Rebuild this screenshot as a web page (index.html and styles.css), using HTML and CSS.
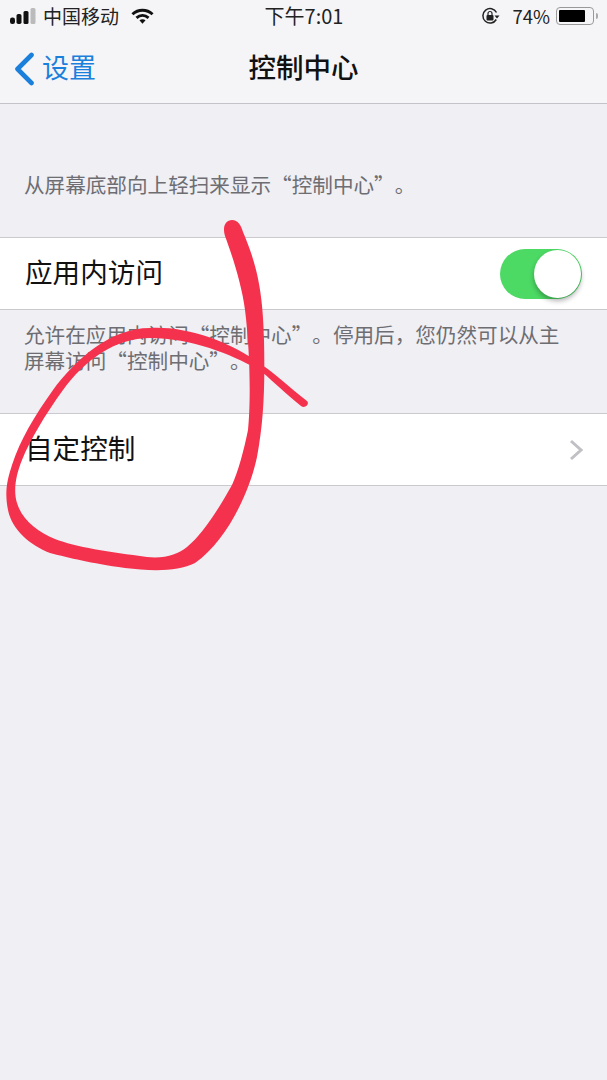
FILE: index.html
```html
<!DOCTYPE html>
<html lang="zh-CN">
<head>
<meta charset="utf-8">
<title>控制中心</title>
<link rel="stylesheet" href="styles.css">
</head>
<body>
<div class="screen">
  <header class="top">
    <div class="status">
      <div class="status-left">
        <svg class="signal" width="26" height="16" viewBox="0 0 26 16"><rect x="0" y="9.500" width="5" height="6.500" rx="2.200" fill="#111"/><rect x="6.500" y="6" width="5" height="10" rx="1.800" fill="#111"/><rect x="13.500" y="3" width="5" height="13" rx="1.500" fill="#111"/><rect x="20.500" y="0" width="5" height="16" rx="1.500" fill="#bbb"/></svg>
        <span class="carrier">中国移动</span>
        <svg class="wifi" width="23" height="17" viewBox="0 0 24 17"><path d="M1.500 6.200C7.500 .6 16.500 .6 22.500 6.200" fill="none" stroke="#111" stroke-width="3"/><path d="M5.700 10C9.500 6.600 14.500 6.600 18.300 10" fill="none" stroke="#111" stroke-width="3"/><path d="M8.800 12.500C10.800 10.900 13.200 10.900 15.200 12.500L12 16Z" fill="#111"/></svg>
      </div>
      <div class="clock">下午7:01</div>
      <div class="status-right">
        <svg class="lock" width="19" height="18" viewBox="0 0 19 18"><path d="M15.300 12.500A7.200 7.200 0 1 1 15.500 5.500" fill="none" stroke="#222" stroke-width="1.500"/><path d="M13.500 8.500H18.500L16 11.500Z" fill="#222"/><rect x="5.500" y="8" width="7" height="5.500" rx="1" fill="#222"/><path d="M7 8V6.500A2 2 0 0 1 11 6.500V8" fill="none" stroke="#222" stroke-width="1.200"/></svg>
        <span class="pct">74%</span>
        <span class="battery"><span class="battery-fill"></span></span>
        <span class="battery-tip"></span>
      </div>
    </div>
    <nav class="nav">
      <div class="back">
        <svg class="chev" width="22" height="34" viewBox="0 0 22 34"><path d="M18.500 3L4.500 17L18.500 31" fill="none" stroke="#1b7fdc" stroke-width="4.600" stroke-linecap="round" stroke-linejoin="round"/></svg>
        <span>设置</span>
      </div>
      <h1 class="title">控制中心</h1>
    </nav>
  </header>
  <main class="content">
    <p class="note note-first">从屏幕底部向上轻扫来显示“控制中心”。</p>
    <section class="row">
      <span class="label">应用内访问</span>
      <span class="switch"><span class="knob"></span></span>
    </section>
    <p class="note note-second">允许在应用内访问“控制中心”。停用后，您仍然可以从主<br>屏幕访问“控制中心”。</p>
    <section class="row">
      <span class="label">自定控制</span>
      <svg class="more" width="14" height="22" viewBox="0 0 14 22"><path d="M2 2L12 11L2 20" fill="none" stroke="#c0c0c5" stroke-width="3"/></svg>
    </section>
  </main>
  <svg class="scribble" width="607" height="1080" viewBox="0 0 607 1080"><path fill="#f5324e" d="M232 220C238 220 241 225 243 232C254 258 263 285 264 340C265 385 264 420 257 457C250 490 228 540 195 563C178 572 150 571 125 568C90 563 70 558 50 553C30 545 12 530 8 510C4 490 8 478 12 465C20 440 35 415 53 390C75 360 110 328 150 328C185 326 225 340 255 360C275 373 290 388 307 401C310 404 305 409 301 406C285 393 275 383 262 372C240 358 195 338 150 338C115 338 85 360 63 390C45 415 30 440 22 460C16 475 13 490 17 503C22 520 38 532 55 539C75 547 110 552 147 557C165 559 178 554 187 547C202 535 218 510 232 485C238 472 244 450 248 430C251 400 250 350 245 310C242 285 232 255 225 236C222 226 226 220 232 220Z"/></svg>
</div>
</body>
</html>
```
FILE: styles.css
```css
* { box-sizing: border-box; }
html, body { margin: 0; padding: 0; }
body {
  font-family: "Noto Sans CJK SC", "Liberation Sans", sans-serif;
  background: #efeff4;
  color: #111;
}
.screen { position: relative; width: 607px; height: 1080px; overflow: hidden; background: #efeff4; }
.top { height: 104px; background: #f5f5f8; border-bottom: 1px solid #c4c4c8; }
.status { display: grid; grid-template-columns: 1fr auto 1fr; align-items: center; height: 32px; padding: 0 9px 0 10px; font-size: 19px; line-height: 32px; color: #222; }
.status-left { display: flex; align-items: center; }
.carrier { margin-left: 7px; }
.wifi { margin-left: 12px; }
.clock { font-size: 20px; }
.status-right { display: flex; align-items: center; justify-content: flex-end; font-size: 18.500px; }
.pct { margin-left: 12px; }
.battery { display: flex; width: 38px; height: 18px; margin-left: 6px; padding: 2px; border: 1px solid #999; border-radius: 4px; }
.battery-fill { width: 26px; background: #000; border-radius: 1px; }
.battery-tip { width: 2px; height: 6px; margin-left: 2px; background: #aaa; border-radius: 0 2px 2px 0; }
.nav { position: relative; display: flex; align-items: center; justify-content: center; height: 68px; }
.back { position: absolute; left: 13px; top: 0; display: flex; align-items: center; gap: 7px; height: 68px; font-size: 27px; color: #1b7fdc; }
.chev { margin-top: 5px; }
.title { margin: 0; font-size: 27.500px; font-weight: 500; color: #111; }
.content { display: flex; flex-direction: column; }
.note { margin: 0; padding: 0 24px; font-size: 20.600px; line-height: 26px; color: #6d6d72; text-spacing-trim: space-all; white-space: nowrap; }
.note-first { padding-top: 67px; height: 133px; }
.note-second { padding-top: 11px; height: 103px; }
.row { display: flex; align-items: center; justify-content: space-between; height: 73px; padding: 0 25px; background: #fff; border-top: 1px solid #c9c9ce; border-bottom: 1px solid #c9c9ce; font-size: 27.600px; color: #111; }
.label { margin-top: -6px; }
.switch { position: relative; display: block; width: 82px; height: 50px; border-radius: 25px; background: #4cd964; }
.knob { position: absolute; right: 1px; top: 1px; width: 47px; height: 48px; border-radius: 50%; background: #fff; box-shadow: 0 3px 5px rgba(0,0,0,.3); }
.more { margin-right: -1px; }
.scribble { position: absolute; left: 0; top: 0; pointer-events: none; }
```
